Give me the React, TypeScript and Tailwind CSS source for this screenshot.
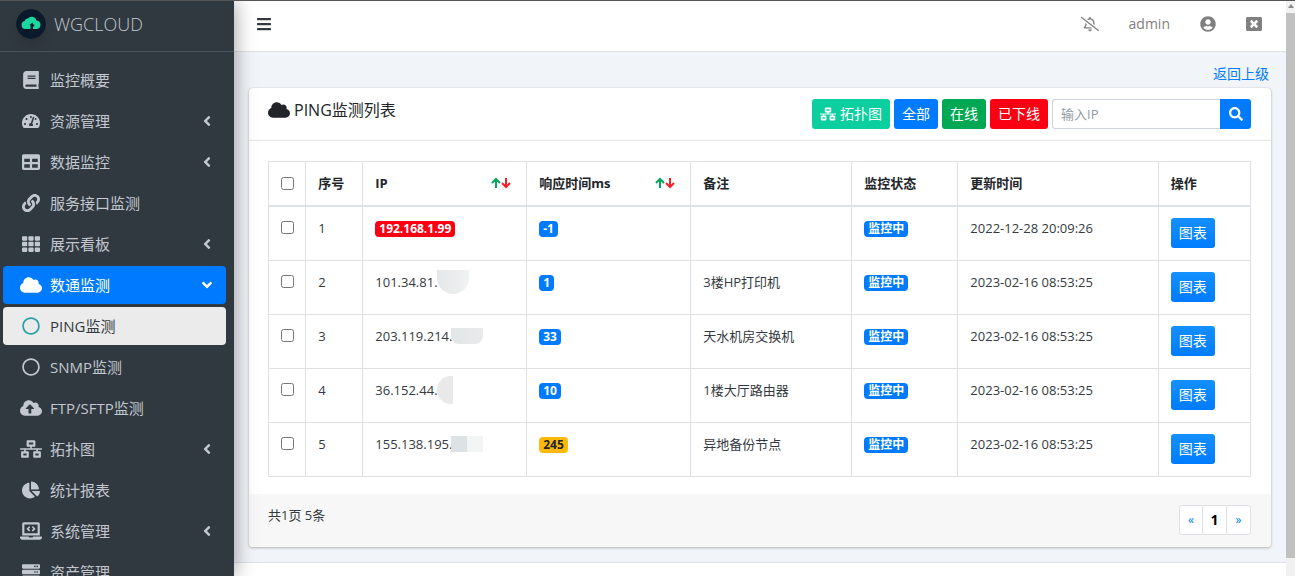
import React, { useState } from "react";
import type { IconType } from "react-icons";
import {
  FaAngleDown,
  FaAngleLeft,
  FaBars,
  FaBook,
  FaChartPie,
  FaCloud,
  FaCloudUploadAlt,
  FaLaptopCode,
  FaLink,
  FaNetworkWired,
  FaRegBellSlash,
  FaRegCircle,
  FaSearch,
  FaServer,
  FaTable,
  FaTachometerAlt,
  FaTh,
  FaUserCircle,
  FaWindowClose,
} from "react-icons/fa";

type NavItem = {
  label: string;
  icon: IconType;
  size: string;
  arrow?: "left" | "down";
  state?: "open" | "current";
};

type Host = {
  id: number;
  ip: string;
  offline?: boolean;
  mask?: string;
  ms: string;
  slow?: boolean;
  remark: string;
  updated: string;
};

const NAV_ITEMS: NavItem[] = [
  { label: "监控概要", icon: FaBook, size: "text-lg" },
  { label: "资源管理", icon: FaTachometerAlt, size: "text-lg", arrow: "left" },
  { label: "数据监控", icon: FaTable, size: "text-lg", arrow: "left" },
  { label: "服务接口监测", icon: FaLink, size: "text-lg" },
  { label: "展示看板", icon: FaTh, size: "text-lg", arrow: "left" },
  { label: "数通监测", icon: FaCloud, size: "text-[22px]", arrow: "down", state: "open" },
  { label: "PING监测", icon: FaRegCircle, size: "text-lg", state: "current" },
  { label: "SNMP监测", icon: FaRegCircle, size: "text-lg" },
  { label: "FTP/SFTP监测", icon: FaCloudUploadAlt, size: "text-[22px]" },
  { label: "拓扑图", icon: FaNetworkWired, size: "text-[22px]", arrow: "left" },
  { label: "统计报表", icon: FaChartPie, size: "text-lg" },
  { label: "系统管理", icon: FaLaptopCode, size: "text-[22px]", arrow: "left" },
  { label: "资产管理", icon: FaServer, size: "text-lg" },
];

const HOSTS: Host[] = [
  { id: 1, ip: "192.168.1.99", offline: true, ms: "-1", remark: "", updated: "2022-12-28 20:09:26" },
  { id: 2, ip: "101.34.81.", mask: "h-6 w-8 rounded-b-full from-[#e4e7e8] to-[#f1f2f2]", ms: "1", remark: "3楼HP打印机", updated: "2023-02-16 08:53:25" },
  { id: 3, ip: "203.119.214.", mask: "h-4 w-8 rounded-b-lg from-[#e3e6e7] to-[#e9ebeb]", ms: "33", remark: "天水机房交换机", updated: "2023-02-16 08:53:25" },
  { id: 4, ip: "36.152.44.", mask: "h-7 w-4 rounded-l-full from-[#e9e9ea] to-[#e9e9ea]", ms: "10", remark: "1楼大厅路由器", updated: "2023-02-16 08:53:25" },
  { id: 5, ip: "155.138.195.", mask: "h-4 w-8 from-[#dde2e4] from-50% to-[#f3f4f4] to-50%", ms: "245", slow: true, remark: "异地备份节点", updated: "2023-02-16 08:53:25" },
];

const BADGE = "inline-block rounded px-1 text-xs leading-4 font-bold";
const CELL = "border border-[#dee2e6] px-3";
const TOOL_BTN = "flex h-[30px] items-center gap-1 rounded-[3px] px-2 text-sm text-white";

const SortArrows = () => (
  <svg viewBox="0 0 20 12" className="h-3 w-5" fill="none" strokeWidth="2">
    <path d="M5 11V2M1 6l4-4 4 4" stroke="#00a65a" />
    <path d="M15 1v9M11 6l4 4 4-4" stroke="#f5222d" />
  </svg>
);

const Logo = () => (
  <svg viewBox="0 0 30 30" className="size-[30px] rounded-full shadow-lg" aria-hidden="true">
    <circle cx="15" cy="15" r="15" fill="#0b1a2b" />
    <path
      d="M9.500 20a4 4 0 0 1-.8-7.900 3 3 0 0 1 3.100-2.600A5 5 0 0 1 20.500 11.500a4.300 4.300 0 0 1 .5 8.500z"
      fill="#1bd7a0"
    />
    <path d="M16.500 13.500l-3 2.500h1v4h2.500v-2.500h1.200v-2h-1.200z" fill="#0b1a2b" />
  </svg>
);

const Sidebar = () => (
  <aside className="relative z-10 w-[234px] shrink-0 overflow-hidden bg-[#30393f] text-[#c2c7d0] shadow-[0_0_20px_rgba(0,0,0,0.4)]">
    <a href="#" className="flex h-[51px] items-center gap-2 border-b border-[#4b545c] pb-1 pl-4">
      <Logo />
      <span className="text-lg font-light">WGCLOUD</span>
    </a>
    <nav className="flex flex-col gap-[3px] pt-[9px] pr-2 pl-[3px]">
      {NAV_ITEMS.map((item) => {
        const Icon = item.icon;
        const color =
          item.state === "open"
            ? "bg-[#007bff] text-white"
            : item.state === "current"
              ? "bg-[#ebebeb] text-[#343a40]"
              : "";
        return (
          <a
            key={item.label}
            href="#"
            className={`flex h-[38px] items-center rounded pr-[11px] pl-4 text-[15px] ${color}`}
          >
            <span className="flex w-6 justify-center">
              <Icon className={`${item.size} ${item.state === "current" ? "text-[#2a9fa5]" : ""}`} />
            </span>
            <span className="ml-[7px] flex-1 whitespace-nowrap">{item.label}</span>
            {item.arrow === "left" && <FaAngleLeft className="text-base" />}
            {item.arrow === "down" && <FaAngleDown className="text-base" />}
          </a>
        );
      })}
    </nav>
  </aside>
);

const App: React.FC = () => {
  const [selected, setSelected] = useState<number[]>([]);
  const allSelected = selected.length === HOSTS.length;

  const toggle = (id: number) =>
    setSelected((prev) => (prev.includes(id) ? prev.filter((x) => x !== id) : [...prev, id]));

  return (
    <div className="flex h-screen overflow-hidden border-t border-[#555] bg-[#f1f4f8] font-['Open_Sans','Noto_Sans_CJK_SC',sans-serif] text-[13px] text-[#343a40]">
      <Sidebar />

      <div className="min-w-0 flex-1">
        <header className="flex h-[51px] items-center border-b border-[#dee2e6] bg-white pr-6 pb-1 pl-[22px] text-[#808080]">
          <button aria-label="菜单" className="text-[#343a40]">
            <FaBars className="text-base" />
          </button>
          <div className="ml-auto flex items-center gap-[30px] text-base">
            <a href="#" aria-label="通知">
              <FaRegBellSlash className="text-lg" />
            </a>
            <a href="#" className="text-sm">admin</a>
            <a href="#" aria-label="用户">
              <FaUserCircle />
            </a>
            <a href="#" aria-label="退出">
              <FaWindowClose />
            </a>
          </div>
        </header>

        <main className="px-[15px]">
          <div className="flex h-9 items-end justify-end pr-[2px] pb-1 text-sm">
            <a href="#" className="text-[#007bff]">返回上级</a>
          </div>

          <section className="rounded bg-white shadow-[0_0_1px_rgba(0,0,0,0.2),0_1px_3px_rgba(0,0,0,0.25)]">
            <div className="flex h-[53px] items-center justify-between border-b border-[#e4e7ea] pr-5 pl-[19px]">
              <h1 className="flex items-center gap-1 pb-2 text-base text-[#212529]">
                <FaCloud className="text-[22px]" />
                PING监测列表
              </h1>
              <div className="flex items-center gap-1">
                <button className={`${TOOL_BTN} bg-[#0ccf9f]`}>
                  <FaNetworkWired className="text-base" />
                  拓扑图
                </button>
                <button className={`${TOOL_BTN} bg-[#007bff]`}>全部</button>
                <button className={`${TOOL_BTN} bg-[#00a854]`}>在线</button>
                <button className={`${TOOL_BTN} bg-[#fb0013]`}>已下线</button>
                <form className="flex" onSubmit={(e) => e.preventDefault()}>
                  <input
                    type="text"
                    aria-label="输入IP"
                    placeholder="输入IP"
                    className="h-[30px] w-[168px] rounded-l-[3px] border border-r-0 border-[#ced4da] px-2 placeholder:text-[#939ba2]"
                  />
                  <button aria-label="搜索" className="flex h-[30px] w-[31px] items-center justify-center rounded-r-[3px] bg-[#007bff] text-sm text-white">
                    <FaSearch />
                  </button>
                </form>
              </div>
            </div>

            <div className="pt-5 pr-5 pb-[17px] pl-[19px]">
              <table className="w-full table-fixed border-collapse text-left">
                <colgroup>
                  <col className="w-[3.8%]" />
                  <col className="w-[5.8%]" />
                  <col className="w-[16.7%]" />
                  <col className="w-[16.7%]" />
                  <col className="w-[16.4%]" />
                  <col className="w-[10.8%]" />
                  <col className="w-[20.4%]" />
                  <col />
                </colgroup>
                <thead className="text-[#212529]">
                  <tr className="h-11 border-b-2 border-[#dee2e6]">
                    <th className={CELL}>
                      <input
                        type="checkbox"
                        aria-label="全选"
                        className="block size-[13px]"
                        checked={allSelected}
                        onChange={() => setSelected(allSelected ? [] : HOSTS.map((h) => h.id))}
                      />
                    </th>
                    <th className={CELL}>序号</th>
                    <th className={CELL}>
                      <div className="flex items-center justify-between pr-[3px]">
                        IP
                        <SortArrows />
                      </div>
                    </th>
                    <th className={CELL}>
                      <div className="flex items-center justify-between pr-[3px]">
                        响应时间ms
                        <SortArrows />
                      </div>
                    </th>
                    <th className={CELL}>备注</th>
                    <th className={CELL}>监控状态</th>
                    <th className={CELL}>更新时间</th>
                    <th className={CELL}>操作</th>
                  </tr>
                </thead>
                <tbody>
                  {HOSTS.map((host) => (
                    <tr key={host.id} className="align-top leading-5">
                      <td className={`${CELL} pt-[14px]`}>
                        <input
                          type="checkbox"
                          aria-label={host.ip}
                          className="block size-[13px]"
                          checked={selected.includes(host.id)}
                          onChange={() => toggle(host.id)}
                        />
                      </td>
                      <td className={`${CELL} pt-[11px]`}>{host.id}</td>
                      <td className={`${CELL} pt-[11px]`}>
                        {host.offline ? (
                          <span className={`${BADGE} bg-[#fb0013] text-white`}>{host.ip}</span>
                        ) : (
                          <div className="flex h-5 items-center">
                            {host.ip}
                            <span className={`-ml-px bg-linear-to-r ${host.mask}`} />
                          </div>
                        )}
                      </td>
                      <td className={`${CELL} pt-[11px]`}>
                        <span className={`${BADGE} ${host.slow ? "bg-[#ffb90a] text-[#212529]" : "bg-[#007bff] text-white"}`}>
                          {host.ms}
                        </span>
                      </td>
                      <td className={`${CELL} pt-[11px]`}>{host.remark}</td>
                      <td className={`${CELL} pt-[11px]`}>
                        <span className={`${BADGE} bg-[#007bff] text-white`}>监控中</span>
                      </td>
                      <td className={`${CELL} pt-[11px]`}>{host.updated}</td>
                      <td className={`${CELL} pt-[11px] pb-3`}>
                        <button className="block h-[30px] rounded-[3px] bg-linear-to-b from-[#1590ff] to-[#007bff] px-2 text-sm text-white">
                          图表
                        </button>
                      </td>
                    </tr>
                  ))}
                </tbody>
              </table>
            </div>

            <div className="flex h-[53px] items-center justify-between rounded-b bg-[#f7f7f7] pr-5 pl-[19px]">
              <span className="pb-2">共1页 5条</span>
              <nav aria-label="分页" className="flex h-[30px] items-stretch divide-x divide-[#dee2e6] rounded-[3px] border border-[#dee2e6] bg-white text-xs text-[#007bff]">
                <a href="#" className="flex w-[23px] items-center justify-center">«</a>
                <a href="#" className="flex w-6 items-center justify-center text-sm font-bold text-black">1</a>
                <a href="#" className="flex w-[23px] items-center justify-center">»</a>
              </nav>
            </div>
          </section>
        </main>

        <footer className="mt-[15px] h-10 border-t border-[#dee2e6] bg-white" />
      </div>

      {/* page scrollbar */}
      <div className="flex w-[9px] shrink-0 flex-col items-center bg-[#f1f1f1]">
        <svg viewBox="0 0 8 12" className="h-3 w-2" aria-hidden="true">
          <path d="M1 7l3-4 3 4z" fill="#8b8b8b" />
        </svg>
        <div className="h-[545px] w-full bg-[#c1c1c1]" />
      </div>
    </div>
  );
};

export default App;
